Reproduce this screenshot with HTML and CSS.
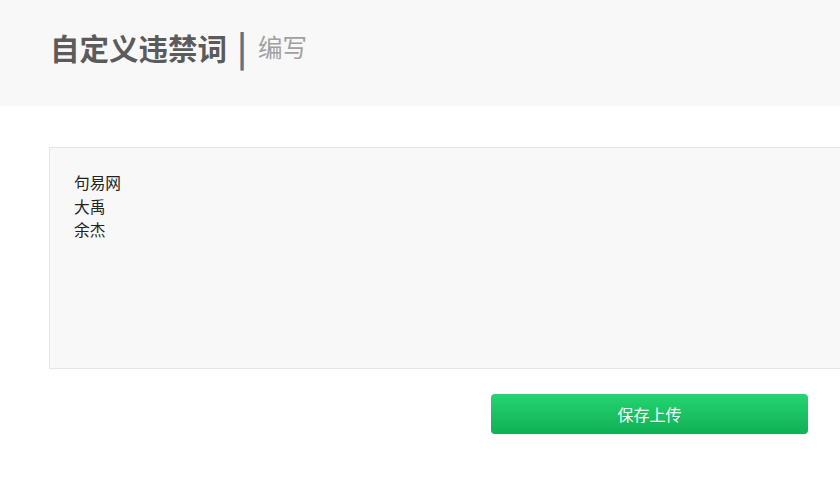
FILE: index.html
```html
<!DOCTYPE html>
<html lang="zh">
<head>
<meta charset="utf-8">
<link rel="stylesheet" href="styles.css">
</head>
<body>
<header class="head">
  <h1 class="title">自定义违禁词<span class="sep">|</span><span class="sub">编写</span></h1>
</header>
<main class="main">
  <div class="editor">
    <div class="words">句易网<br>大禹<br>余杰</div>
  </div>
  <div class="actions">
    <button class="save">保存上传</button>
  </div>
</main>
</body>
</html>
```
FILE: styles.css
```css
html, body {
  margin: 0;
  padding: 0;
  overflow: hidden;
  background: #fff;
  font-family: "Microsoft YaHei", "Noto Sans CJK SC", sans-serif;
}
.head {
  height: 106px;
  background: #f8f8f8;
  padding-left: 50px;
  box-sizing: border-box;
  padding-top: 26px;
}
.title {
  margin: 0;
  font-size: 29.5px;
  line-height: 42px;
  font-weight: bold;
  color: #5b5b5b;
  display: flex;
  align-items: center;
}
.sep {
  font-weight: bold;
  color: #5f7286;
  margin: 0 11px 0 10px;
  font-size: 34px;
  line-height: 42px;
}
.sub {
  font-weight: normal;
  color: #a0a0a0;
  font-size: 24.5px;
}
.main {
  padding: 41px 0 0 49px;
}
.editor {
  width: 830px;
  height: 222px;
  box-sizing: border-box;
  border: 1px solid #e6e6e6;
  background: #f8f8f8;
  padding: 23px 24px;
}
.words {
  font-size: 15.7px;
  line-height: 23.5px;
  color: #222;
}
.actions {
  padding: 25px 0 0 442px;
}
.save {
  width: 317px;
  height: 40px;
  border: none;
  border-radius: 4px;
  background: linear-gradient(#25d472, #10b055);
  color: #fff;
  font-size: 16px;
  font-family: inherit;
}
```
